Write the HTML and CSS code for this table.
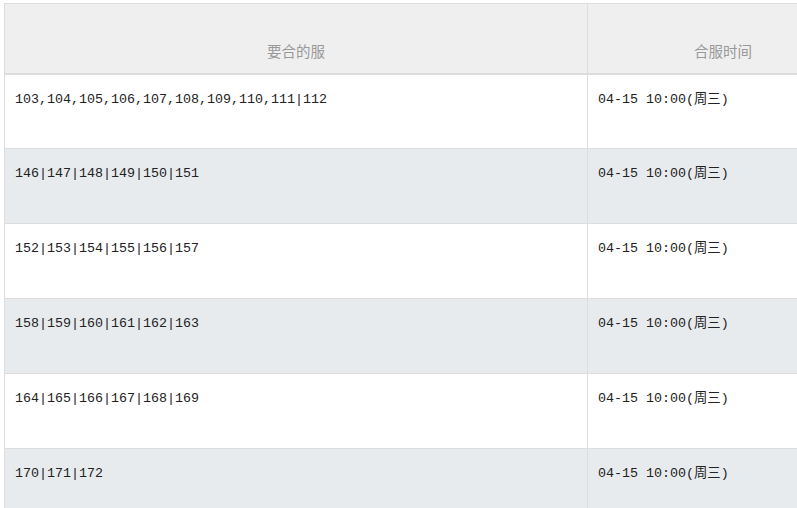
FILE: index.html
```html
<!DOCTYPE html>
<html lang="zh-CN">
<head>
    <meta charset="UTF-8">
    <title>合服时间表</title>
    <link rel="stylesheet" href="styles.css">
</head>
<body>
    <div class="wrap">
        <table class="merge-table">
            <colgroup>
                <col class="col-servers">
                <col class="col-time">
            </colgroup>
            <thead>
                <tr>
                    <th>要合的服</th>
                    <th>合服时间</th>
                </tr>
            </thead>
            <tbody>
                <tr>
                    <td>103,104,105,106,107,108,109,110,111|112</td>
                    <td>04-15 10:00(周三)</td>
                </tr>
                <tr>
                    <td>146|147|148|149|150|151</td>
                    <td>04-15 10:00(周三)</td>
                </tr>
                <tr>
                    <td>152|153|154|155|156|157</td>
                    <td>04-15 10:00(周三)</td>
                </tr>
                <tr>
                    <td>158|159|160|161|162|163</td>
                    <td>04-15 10:00(周三)</td>
                </tr>
                <tr>
                    <td>164|165|166|167|168|169</td>
                    <td>04-15 10:00(周三)</td>
                </tr>
                <tr>
                    <td>170|171|172</td>
                    <td>04-15 10:00(周三)</td>
                </tr>
            </tbody>
        </table>
    </div>
</body>
</html>
```

FILE: styles.css
```css
html {
    overflow: hidden;
}

body {
    margin: 0;
    background: #ffffff;
    font-family: "Liberation Mono", "Noto Sans CJK SC", monospace;
}

.wrap {
    padding: 3px 0 0 4px;
    overflow: hidden;
}

.merge-table {
    border-collapse: collapse;
    table-layout: fixed;
    width: 854px;
    border-top: 1px solid #dddddd;
    border-left: 1px solid #dddddd;
}

.col-servers { width: 583px; }
.col-time { width: 271px; }

.merge-table th {
    height: 70px;
    padding: 0 10px 12px;
    box-sizing: border-box;
    background: #efefef;
    color: #999999;
    font-family: "Noto Sans CJK SC", sans-serif;
    font-size: 14.5px;
    font-weight: normal;
    text-align: center;
    vertical-align: bottom;
    border-right: 1px solid #dddddd;
    border-bottom: 2px solid #dddddd;
}

.merge-table td {
    height: 75px;
    padding: 15px 10px 0;
    box-sizing: border-box;
    color: #222222;
    font-size: 13.33px;
    line-height: 20px;
    vertical-align: top;
    border-right: 1px solid #dddddd;
    border-bottom: 1px solid #dddddd;
}

.merge-table tbody tr:nth-child(even) td {
    background: #e8ebee;
}
```
